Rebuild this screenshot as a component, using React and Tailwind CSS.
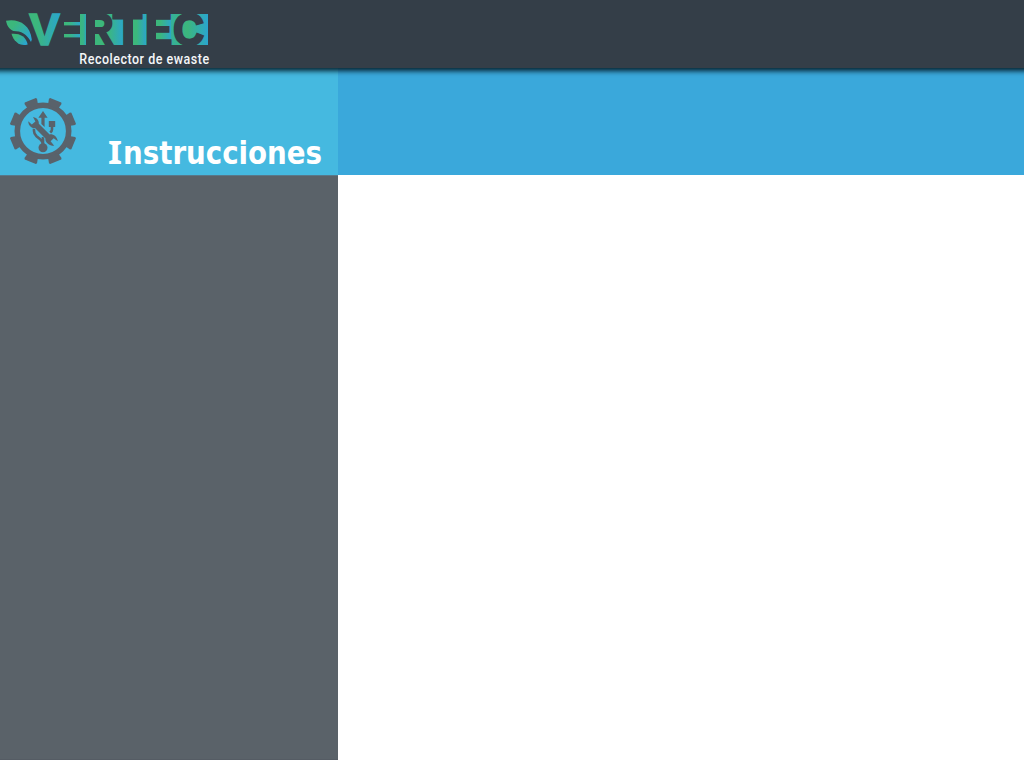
const TEETH = [22.5, 67.5, 112.5, 157.5, 202.5, 247.5, 292.5, 337.5];

function Logo() {
  return (
    <svg className="block h-[68px] w-[220px]" viewBox="0 0 220 68">
      <defs>
        <linearGradient id="brand">
          <stop offset="0.25" stopColor="#3cb77c" />
          <stop offset="1" stopColor="#2aa5cf" />
        </linearGradient>
        <linearGradient id="leaf" x1="0" y1="0" x2="1" y2="0.7">
          <stop offset="0.3" stopColor="#3cb77c" />
          <stop offset="1" stopColor="#2aa5cf" />
        </linearGradient>
        <linearGradient id="stem">
          <stop offset="0" stopColor="#3cb77c" />
          <stop offset="0.6" stopColor="#37b48c" />
          <stop offset="1" stopColor="#2ba8bd" />
        </linearGradient>
        <linearGradient id="block" gradientUnits="userSpaceOnUse" x1="171" y1="0" x2="208" y2="0">
          <stop offset="0" stopColor="#35b09b" />
          <stop offset="0.45" stopColor="#3cb77c" />
          <stop offset="1" stopColor="#2aa5cf" />
        </linearGradient>
      </defs>
      <path fill="url(#leaf)" d="M6 20.8C18 18.5 30 24 31.8 39.5L31 42C27 34 21 31 13.5 31C9 29 7 26 6 20.8Z" />
      <path fill="url(#leaf)" d="M11.5 33.8C19 33 26 36 27.7 44.5C20.5 47 13.5 41.5 11.5 33.8Z" />

      <g fill="url(#brand)">
        <rect x="64" y="22" width="17" height="3.4" />
        <rect x="64" y="34" width="17" height="3.4" />
        <rect x="95" y="14" width="8" height="31" fill="#3cb77c" />
        <rect x="102.9" y="14" width="21.1" height="31" />
        <rect x="133" y="14" width="14" height="31" />
        <rect x="156" y="14" width="16" height="31" />
      </g>
      <rect x="171" y="14" width="37" height="31" fill="url(#block)" />
      <g
        className="fill-[#343e48] stroke-[#343e48] font-['Liberation_Sans',sans-serif] text-[45px] font-bold"
        strokeWidth="1.2"
      >
        <text transform="translate(83 45) scale(0.95 1)" strokeWidth="1.8">R</text>
        <text transform="translate(112.5 45) scale(1.09 1)">T</text>
        <text transform="translate(144.7 45) scale(0.92 1)" strokeWidth="1.8">E</text>
        <text transform="translate(173.2 45) scale(0.94 1)" strokeWidth="2.6">C</text>
      </g>
      <rect x="80" y="14" width="6" height="31" fill="url(#stem)" />
      <text
        transform="translate(29.3 44.7) scale(1.02 1)"
        className="font-['Liberation_Sans',sans-serif] text-[45px] font-bold"
        fill="url(#brand)"
        stroke="url(#brand)"
        strokeWidth="1.6"
      >
        V
      </text>
      <text
        transform="translate(79.3 64.4) scale(0.88 1)"
        textLength="147.5"
        lengthAdjust="spacing"
        className="fill-[#f4f6f8] font-[Roboto,sans-serif] text-[14.2px] font-medium"
      >
        Recolector de ewaste
      </text>
    </svg>
  );
}

function GearIcon() {
  return (
    <svg className="block size-[68px] shrink-0" viewBox="-34 -34 68 68" fill="#59626b">
      <circle r="25.7" fill="none" stroke="#59626b" strokeWidth="5.6" />
      {TEETH.map((angle) => (
        <path key={angle} transform={`rotate(${angle})`} d="M-5.4 -26L-6.8 -32L-6 -33.2H6L6.8 -32L5.4 -26Z" />
      ))}
      <path d="M0 -20L4.6 -13.3H1.6V-4L-1.6 -7V-13.3H-4.6Z" />
      <rect x="5.8" y="-10" width="6.4" height="6" rx="0.5" />
      <path d="M9 -5V-1.5Q9 0 7.2 1.5" fill="none" stroke="#59626b" strokeWidth="2.6" />
      <circle cy="16.8" r="4.5" />
      <path d="M-9 -3V0Q-9 3 -6.5 5.2L-2.5 8.5Q0 10.5 0 14V16" fill="none" stroke="#59626b" strokeWidth="2.6" />
      <path d="M0 6V14" stroke="#59626b" strokeWidth="2.6" />
      <path
        d="M-10 -14C-5.5 -13.2 -3.8 -9.8 -4.2 -7.2L6.6 3.4C10.5 3 14 5.5 14.8 10.3L10.7 7.2L7.6 10.2L11.2 14.8C6 14.8 2 11.2 2.4 7.4L-8 -2.9C-11.5 -2.6 -14.5 -5.3 -14.8 -9.8L-11.2 -6.6L-7.6 -9.6Z"
        stroke="#45b9e0"
        strokeWidth="1.2"
        paintOrder="stroke"
      />
    </svg>
  );
}

export default function App() {
  return (
    <div className="flex h-[760px] w-[1024px] flex-col overflow-hidden bg-white">
      <header className="z-10 -mx-3 h-[68px] shrink-0 bg-[#343e48] px-3 shadow-[0_3px_5px_0_rgba(0,20,30,0.9)]">
        <Logo />
      </header>
      <div className="flex h-[107px] shrink-0 bg-[#3aa8db]">
        <div className="flex w-[338px] bg-[#45b9e0] pt-[29px] pl-[9px]">
          <GearIcon />
          <h1 className="pt-[25px] pl-[29px]">
            <svg className="block h-[53px] w-[230px] overflow-visible" viewBox="0 0 230 53">
              <text className="fill-white text-[31.5px] font-bold" y="42">
                <tspan x="2" textLength="14" lengthAdjust="spacingAndGlyphs" className="font-['Noto_Sans',sans-serif]">
                  I
                </tspan>
                <tspan
                  x="17"
                  textLength="199"
                  lengthAdjust="spacingAndGlyphs"
                  className="font-['DejaVu_Sans',sans-serif]"
                >
                  nstrucciones
                </tspan>
              </text>
            </svg>
          </h1>
        </div>
      </div>
      <main className="flex flex-1">
        <aside className="w-[338px] border-t border-b border-t-[#58788a] border-b-[#555c64] bg-[#5a6269]" />
        <section className="flex-1 bg-white" />
      </main>
    </div>
  );
}
